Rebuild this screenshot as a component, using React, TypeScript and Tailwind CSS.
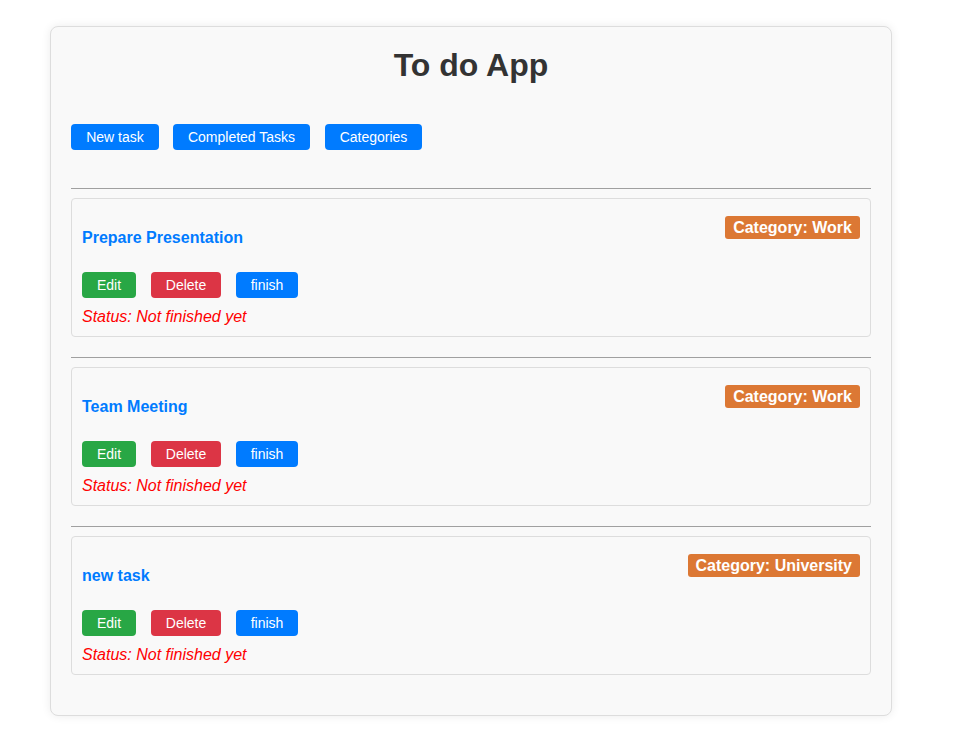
const tasks = [
  { title: "Prepare Presentation", category: "Work" },
  { title: "Team Meeting", category: "Work" },
  { title: "new task", category: "University" },
];

function Btn({ label, color, width }: { label: string; color: string; width: string }) {
  return (
    <button className={`h-[26px] rounded-[4px] text-center text-[14px] leading-[26px] text-white ${color} ${width}`}>
      {label}
    </button>
  );
}

export default function App() {
  return (
    <div className="min-h-[750px] bg-white pt-[26px] pb-[9px] font-['Liberation_Sans',Arial,sans-serif]">
      <div className="ml-[50px] w-[842px] rounded-[8px] border border-[#dddddd] bg-[#f9f9f9] p-[20px] shadow-[0_0_10px_rgba(0,0,0,0.08)]">
        <h1 className="text-center text-[32px] leading-[37px] font-bold text-[#333333]">To do App</h1>

        <div className="mt-[40px] flex">
          <Btn label="New task" color="bg-[#007bff]" width="w-[88px]" />
          <div className="w-[14px]" />
          <Btn label="Completed Tasks" color="bg-[#007bff]" width="w-[137px]" />
          <div className="w-[15px]" />
          <Btn label="Categories" color="bg-[#007bff]" width="w-[97px]" />
        </div>

        <div className="mt-[38px]">
          {tasks.map((t) => (
            <div key={t.title} className="mb-[20px]">
              <hr className="border-0 border-t border-[#a0a0a0] mb-[9px]" />
              <div className="rounded-[4px] border border-[#dddddd] p-[10px]">
                <div className="flex items-start justify-between">
                  <h3 className="mt-[19px] mb-[24px] text-[16px] leading-[20px] font-bold text-[#007bff]">{t.title}</h3>
                  <span className="mt-[7px] h-[23px] rounded-[3px] bg-[#dc7834] px-[8px] text-[16px] leading-[23px] font-bold text-white">
                    Category: {t.category}
                  </span>
                </div>
                <div className="flex gap-[15px]">
                  <Btn label="Edit" color="bg-[#28a745]" width="w-[54px]" />
                  <Btn label="Delete" color="bg-[#dc3545]" width="w-[70px]" />
                  <Btn label="finish" color="bg-[#007bff]" width="w-[62px]" />
                </div>
                <p className="mt-[10px] text-[16px] leading-[18px] italic text-[#ff0000]">Status: Not finished yet</p>
              </div>
            </div>
          ))}
        </div>
      </div>
    </div>
  );
}
